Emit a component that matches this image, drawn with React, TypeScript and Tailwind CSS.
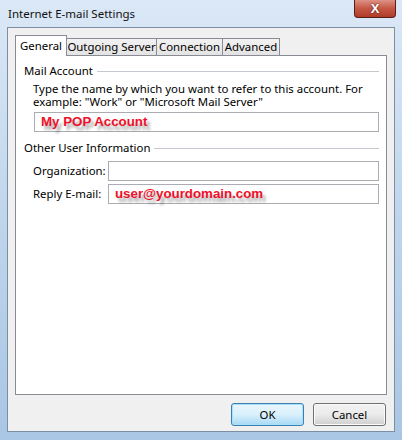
import React from 'react';

const tabs = ['General', 'Outgoing Server', 'Connection', 'Advanced'];

function GroupTitle({ label }: { label: string }) {
  return (
    <div className="flex items-center h-[14px]">
      <span className="pr-[4px] whitespace-nowrap">{label}</span>
      <div className="flex-1 border-t border-[#c3c9ce]" />
    </div>
  );
}

function TextBox({ value, className }: { value?: string; className: string }) {
  return (
    <div className={`h-[20px] border border-[#abadb3] bg-white flex items-center ${className}`}>
      {value && (
        <span className="pl-[6px] text-[13.3px] font-bold text-[#f0102a] whitespace-nowrap [font-family:'Liberation_Sans',Arial,sans-serif] [text-shadow:3px_4px_3px_rgba(0,0,0,0.35)]">
          {value}
        </span>
      )}
    </div>
  );
}

export default function App(): React.ReactElement {
  return (
    <div className="w-[402px] h-[440px] bg-gradient-to-b from-[#dbe8f6] via-[#bfd5ec] to-[#a9c6e4] px-[7px] pb-[8px] flex flex-col text-[11.4px] text-black [font-family:'Noto_Sans',sans-serif]">
      <div className="h-[27px] flex items-start justify-between">
        <span className="mt-[5px] ml-[1px] text-[11.5px] text-[#111] whitespace-nowrap">Internet E-mail Settings</span>
        <div className="w-[42px] h-[18px] -mr-[1px] rounded-b-[4px] border border-[#5a1f17] border-t-0 bg-gradient-to-b from-[#dc9184] via-[#c45745] to-[#b03c28] flex items-center justify-center">
          <span className="text-white font-bold text-[13px] leading-none [font-family:'Liberation_Sans',sans-serif] [text-shadow:0_0_2px_#4a1409]">X</span>
        </div>
      </div>

      <div className="flex-1 bg-[#f0f0f0] border border-[#7c8ea3] flex flex-col">
        <div className="ml-[7px] mt-[7px] flex items-end h-[20px]">
          {tabs.map((t, i) =>
            i === 0 ? (
              <div key={t} className="h-[21px] w-[52px] bg-white border border-[#898c95] border-b-0 flex items-center justify-center -mb-px z-10 relative whitespace-nowrap">
                {t}
              </div>
            ) : (
              <div key={t} className={`h-[17px] border border-[#898c95] border-b-0 bg-gradient-to-b from-[#f2f2f2] to-[#e3e3e3] flex items-center justify-center -ml-px whitespace-nowrap ${i === 1 ? 'w-[91px]' : i === 2 ? 'w-[67px]' : 'w-[58px]'}`}>
                {t}
              </div>
            ),
          )}
        </div>

        <div className="ml-[7px] w-[372px] h-[340px] bg-white border border-[#898c95] pl-[8px] pr-[7px] pt-[8px]">
          <GroupTitle label="Mail Account" />
          <div className="pl-[9px] mt-[4px] leading-[13px] whitespace-nowrap">
            <p>Type the name by which you want to refer to this account. For</p>
            <p>example: &quot;Work&quot; or &quot;Microsoft Mail Server&quot;</p>
          </div>
          <TextBox value="My POP Account" className="ml-[10px] mt-[4px]" />

          <div className="mt-[9px]">
            <GroupTitle label="Other User Information" />
          </div>
          <div className="pl-[9px] mt-[6px] flex items-center">
            <span className="w-[75px] whitespace-nowrap">Organization:</span>
            <TextBox className="flex-1" />
          </div>
          <div className="pl-[9px] mt-[3px] flex items-center">
            <span className="w-[75px] whitespace-nowrap">Reply E-mail:</span>
            <TextBox value="user@yourdomain.com" className="flex-1" />
          </div>
        </div>

        <div className="flex justify-end gap-[9px] mt-[8px] mr-[8px]">
          <button className="w-[73px] h-[23px] rounded-[3px] border border-[#3c7fb1] bg-gradient-to-b from-[#eaf6fd] via-[#d9f0fc] to-[#a7d9f5] shadow-[inset_0_0_0_1px_#a8e1fb]">
            OK
          </button>
          <button className="w-[73px] h-[23px] rounded-[3px] border border-[#707070] bg-gradient-to-b from-[#f2f2f2] via-[#ebebeb] to-[#cfcfcf] shadow-[inset_0_0_0_1px_#fbfbfb]">
            Cancel
          </button>
        </div>
      </div>
    </div>
  );
}
